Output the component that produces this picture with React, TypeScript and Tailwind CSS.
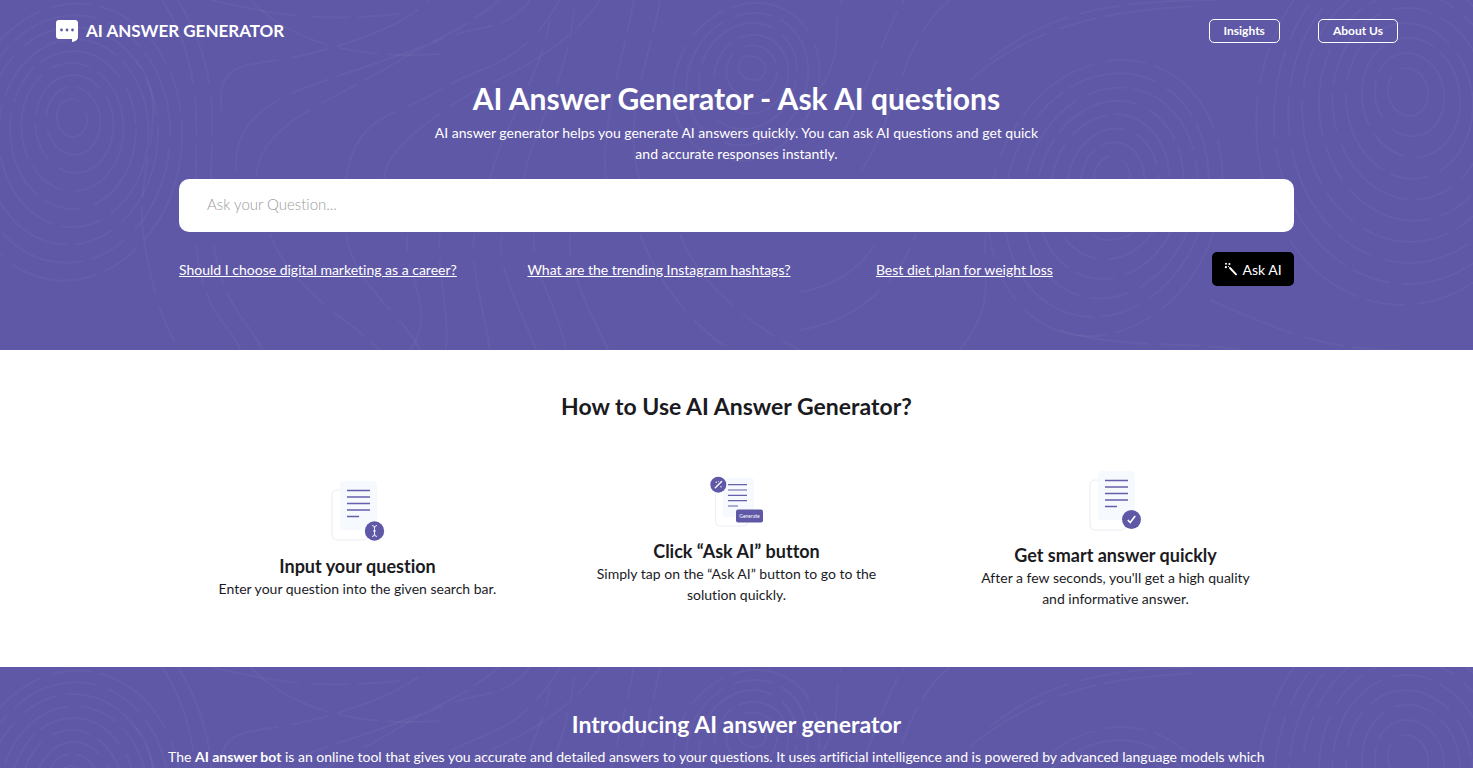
import React, { useState } from "react";

const suggestions = [
	"Should I choose digital marketing as a career?",
	"What are the trending Instagram hashtags?",
	"Best diet plan for weight loss",
];

const swirls = [
	{ cx: 72, cy: 118, rx: 15, ry: 19, step: 15, count: 9, tilt: -8 },
	{ cx: 752, cy: 68, rx: 14, ry: 12, step: 14, count: 6, tilt: 20 },
	{ cx: 1112, cy: 178, rx: 18, ry: 22, step: 17, count: 8, tilt: 6 },
	{ cx: 1408, cy: 92, rx: 20, ry: 24, step: 18, count: 10, tilt: -14 },
];

const flowLines = [
	"M178 0C232 90 204 150 212 230S250 320 262 350",
	"M162 0C214 80 190 160 196 240S230 320 240 350",
	"M136 60C176 110 132 170 144 240S164 320 178 350",
	"M222 110C214 60 250 66 290 58S400 30 430 0",
	"M236 170C232 110 290 92 350 72S450 40 500 0",
	"M256 176C262 120 330 104 400 60S500 40 530 0",
	"M346 180C356 110 400 116 440 90S520 70 560 0",
	"M384 180C384 150 430 120 460 100S560 60 600 0",
	"M250 0C290 40 350 60 440 54",
	"M210 0C260 10 300 24 400 14",
	"M270 234C290 290 350 320 380 350",
	"M346 234C356 290 400 310 420 350",
	"M410 350C440 310 400 270 408 234",
	"M446 350C450 310 436 270 440 234",
	"M490 350C484 310 470 270 474 234",
	"M536 350C522 310 496 270 502 234",
	"M566 350C560 310 530 270 534 234",
	"M608 350C590 310 566 270 570 234",
	"M680 234C700 290 760 330 800 350",
	"M640 234C660 290 700 330 730 350",
	"M490 180C500 130 540 80 550 20",
	"M524 180C530 130 566 90 574 10",
	"M606 180C600 130 620 70 634 0",
	"M640 180C620 120 650 60 660 0",
	"M810 100C850 60 830 20 842 0",
	"M838 140C870 90 880 40 904 0",
	"M862 170C900 110 900 40 950 0",
	"M970 80C1040 20 1120 10 1200 6",
	"M990 60C1050 10 1120 0 1220 0",
	"M800 292C840 286 870 260 880 234",
	"M800 330C860 320 900 280 916 234",
	"M960 350C1000 300 980 270 986 234",
	"M1060 330C1120 350 1180 340 1240 350",
	"M1210 300C1280 330 1320 350 1400 350",
];

const Swirls = () => (
	<svg
		className="absolute inset-0 h-full w-full"
		viewBox="0 0 1473 350"
		preserveAspectRatio="xMidYMin slice"
		fill="none"
		stroke="#ffffff"
		strokeOpacity="0.035"
		strokeWidth="2"
		strokeDasharray="90 12 40 8"
		aria-hidden="true"
	>
		{swirls.map((s) =>
			Array.from({ length: s.count }, (_, i) => (
				<ellipse
					key={`${s.cx}-${i}`}
					cx={s.cx + (i % 3)}
					cy={s.cy + i * 3}
					rx={s.rx + i * s.step * 0.8}
					ry={s.ry + i * s.step}
					transform={`rotate(${s.tilt + i * 2} ${s.cx} ${s.cy})`}
				/>
			))
		)}
		{flowLines.map((d) => (
			<path key={d} d={d} />
		))}
	</svg>
);

const Logo = () => (
	<svg width="22" height="22" viewBox="0 0 22 22" aria-hidden="true">
		<path d="M3 0H19A3 3 0 0 1 22 3V17C22 20 19 21.5 16 22V19H3A3 3 0 0 1 0 16V3A3 3 0 0 1 3 0Z" fill="#fff" />
		<g fill="#5f58a6">
			<circle cx="5.5" cy="10" r="1.4" />
			<circle cx="11" cy="10" r="1.4" />
			<circle cx="16.5" cy="10" r="1.4" />
		</g>
	</svg>
);

const WandIcon = () => (
	<svg width="14" height="14" viewBox="0 0 14 14" aria-hidden="true">
		<path d="M6 6L12 12.4" stroke="#fff" strokeWidth="1.9" strokeLinecap="round" />
		<g fill="#fff">
			<circle cx="2" cy="1.8" r="1" />
			<circle cx="5.4" cy="2" r="1.1" />
			<circle cx="1.9" cy="5.2" r="1.1" />
			<circle cx="4.5" cy="4.5" r="0.6" />
		</g>
	</svg>
);

const Sheets = () => (
	<>
		<rect x="14" y="11" width="36" height="50" rx="5" fill="#fff" stroke="#ececf4" />
		<rect x="22" y="2" width="37" height="49" rx="4" fill="#f6f9fe" />
		<path d="M29 11.5H52M29 18H52M29 24.5H52M29 31H52M29 37.5H41" stroke="#6660ab" strokeWidth="1.4" />
	</>
);

const InputIcon = () => (
	<svg width="80" height="75" viewBox="0 0 80 75" aria-hidden="true">
		<Sheets />
		<circle cx="56.5" cy="52" r="9.7" fill="#5f58a6" />
		<path
			d="M54 46.5Q56.5 46.5 56.5 49V55Q56.5 57.5 54 57.5M59 46.5Q56.5 46.5 56.5 49M56.5 55Q56.5 57.5 59 57.5M55 52H58"
			fill="none"
			stroke="#fff"
			strokeWidth="0.9"
		/>
	</svg>
);

const GenerateIcon = () => (
	<svg width="80" height="65" viewBox="0 0 80 65" aria-hidden="true">
		<rect x="18.5" y="12" width="32" height="40" rx="4" fill="#fff" stroke="#eeeef6" />
		<rect x="26" y="4" width="31" height="39" rx="3" fill="#f6f9fe" />
		<path d="M31 10.7H50M31 16H50M31 21.3H50M31 26.7H50M31 32H41" stroke="#6660ab" strokeWidth="1.2" />
		<circle cx="21.3" cy="10.7" r="8" fill="#5f58a6" />
		<path d="M18.3 13.7L24.6 7.6" stroke="#fff" strokeWidth="1.4" strokeLinecap="round" />
		<g fill="#fff">
			<circle cx="19.2" cy="8.2" r="0.7" />
			<circle cx="21.4" cy="7.2" r="0.5" />
			<circle cx="24" cy="12.8" r="0.7" />
		</g>
		<rect x="39" y="35.5" width="27" height="13" rx="2" fill="#5f58a6" />
		<text x="52.5" y="43.5" fill="#fff" fontSize="5" textAnchor="middle">
			Generate
		</text>
	</svg>
);

const AnswerIcon = () => (
	<svg width="80" height="74" viewBox="0 0 80 74" aria-hidden="true">
		<Sheets />
		<circle cx="55.5" cy="50.5" r="9.5" fill="#5f58a6" />
		<path d="M51.8 51L54.2 53.6L59.2 47" fill="none" stroke="#fff" strokeWidth="1.6" />
	</svg>
);

const steps = [
	{ icon: <InputIcon />, title: "Input your question", text: "Enter your question into the given search bar." },
	{
		icon: <GenerateIcon />,
		title: "Click “Ask AI” button",
		text: "Simply tap on the “Ask AI” button to go to the solution quickly.",
	},
	{
		icon: <AnswerIcon />,
		title: "Get smart answer quickly",
		text: "After a few seconds, you'll get a high quality and informative answer.",
	},
];

const NavLink = ({ children }: { children: React.ReactNode }) => (
	<a href="#" className="flex h-6 items-center rounded-[5px] border border-white px-3.5 text-xs font-bold">
		{children}
	</a>
);

const App: React.FC = () => {
	const [question, setQuestion] = useState("");

	return (
		<div className="flex min-h-screen flex-col bg-white font-['Lato',sans-serif] text-sm leading-[21px] text-[#1b1b1f] [font-variant-ligatures:none]">
			<div className="relative overflow-hidden bg-[#5f58a6] pb-16 text-white">
				<Swirls />
				<header className="relative flex items-center justify-between pt-[19px] pr-[75px] pl-14">
					<a href="#" className="flex items-center gap-2 text-[17px] leading-6 font-bold">
						<Logo />
						AI ANSWER GENERATOR
					</a>
					<nav className="flex gap-[38px]">
						<NavLink>Insights</NavLink>
						<NavLink>About Us</NavLink>
					</nav>
				</header>
				<main className="relative mx-auto max-w-[1115px] pt-[35px]">
					<h1 className="text-center text-3xl leading-10 font-bold">AI Answer Generator - Ask AI questions</h1>
					<p className="mx-auto mt-1 max-w-[620px] text-center">
						AI answer generator helps you generate AI answers quickly. You can ask AI questions and get quick and
						accurate responses instantly.
					</p>
					<form onSubmit={(e) => e.preventDefault()}>
						<input
							type="text"
							aria-label="Ask your Question"
							placeholder="Ask your Question..."
							value={question}
							onChange={(e) => setQuestion(e.target.value)}
							className="mt-[15px] block h-[53px] w-full rounded-[10px] bg-white px-7 pb-1 text-[15px] font-light text-[#1b1b1f] outline-none placeholder:text-[#9b9b9b]"
						/>
						<div className="mt-5 grid grid-cols-16 items-center">
							{suggestions.map((s) => (
								<a
									key={s}
									href="#"
									className="col-span-5 underline last-of-type:col-span-4"
									onClick={() => setQuestion(s)}
								>
									{s}
								</a>
							))}
							<button
								type="submit"
								className="col-span-2 flex h-[34px] w-[82px] items-center justify-center gap-1 justify-self-end rounded-[5px] bg-black"
							>
								<WandIcon />
								Ask AI
							</button>
						</div>
					</form>
				</main>
			</div>

			<section className="pt-10 pb-[58px]">
				<h2 className="text-center text-[23px] leading-8 font-bold">How to Use AI Answer Generator?</h2>
				<div className="mx-auto mt-[47px] grid max-w-[1137px] grid-cols-3 items-center">
					{steps.map((step) => (
						<div key={step.title} className="flex flex-col items-center text-center">
							{step.icon}
							<h3 className="text-lg leading-6 font-bold">{step.title}</h3>
							<p className="max-w-[290px]">{step.text}</p>
						</div>
					))}
				</div>
			</section>

			<section className="relative flex-1 overflow-hidden bg-[#5f58a6] pt-[41px] text-white">
				<Swirls />
				<div className="relative mx-auto max-w-[1137px]">
					<h2 className="text-center text-[23px] leading-8 font-bold">Introducing AI answer generator</h2>
					<p className="mt-1.5">
						The <b>AI answer bot</b> is an online tool that gives you accurate and detailed answers to your questions. It
						uses artificial intelligence and is powered by advanced language models which
					</p>
				</div>
			</section>
		</div>
	);
};

export default App;
